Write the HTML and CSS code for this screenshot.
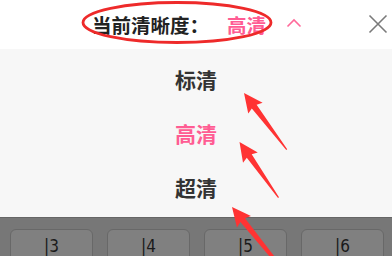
FILE: index.html
```html
<!doctype html>
<html lang="zh-CN">
  <head>
    <meta charset="UTF-8" />
    <meta name="viewport" content="width=device-width, initial-scale=1.0" />
    <title>清晰度</title>
    <link rel="stylesheet" href="styles.css">
  </head>
  <body>
    <div class="screen">
      <div class="header">
        <div class="current">
          <span class="label">当前清晰度：</span>
          <span class="value">高清</span>
        </div>
        <svg class="chevron" width="16" height="10" viewBox="0 0 16 10">
          <path d="M1.5 8.5 L8 2 L14.5 8.5" fill="none" stroke="#ff6a9a" stroke-width="1.6" />
        </svg>
        <svg class="close" width="20" height="20" viewBox="0 0 20 20">
          <path d="M1.5 1.5 L18.5 18.5 M18.5 1.5 L1.5 18.5" stroke="#7a7a7a" stroke-width="1.6" />
        </svg>
      </div>

      <div class="menu">
        <div class="item">标清</div>
        <div class="item active">高清</div>
        <div class="item">超清</div>
      </div>

      <div class="episodes">
        <div class="ep">|3</div>
        <div class="ep">|4</div>
        <div class="ep">|5</div>
        <div class="ep">|6</div>
      </div>

      <!-- annotation marks over the screenshot -->
      <svg class="marks" width="392" height="256" viewBox="0 0 392 256">
        <ellipse cx="177" cy="22.5" rx="94" ry="20" fill="none" stroke="#ee2a2a" stroke-width="2.8" />
        <g fill="#ff3333">
          <path transform="translate(244 93) rotate(-37)" d="M0 0 L9 19 L3 17 L0.6 71 L-0.6 71 L-3 17 L-9 19 Z" />
          <path transform="translate(239.5 142) rotate(-35)" d="M0 0 L9 19 L3 17 L0.6 68 L-0.6 68 L-3 17 L-9 19 Z" />
          <path transform="translate(232 207) rotate(-39)" d="M0 0 L9 19 L3 17 L1.5 80 L-1.5 80 L-3 17 L-9 19 Z" />
        </g>
      </svg>
    </div>
  </body>
</html>
```

FILE: styles.css
```css
body {
  margin: 0;
  font-family: "Noto Sans CJK SC", "Noto Sans", sans-serif;
  background: #ffffff;
}

.screen {
  position: relative;
  width: 392px;
  height: 256px;
  overflow: hidden;
  display: flex;
  flex-direction: column;
}

.header {
  height: 49px;
  background: #ffffff;
  display: flex;
  align-items: center;
  flex-shrink: 0;
}

.current {
  margin-left: 92px;
  display: flex;
  align-items: center;
  font-size: 19.5px;
  font-weight: 700;
  line-height: 24px;
}

.label {
  color: #222222;
}

.value {
  margin-left: 18px;
  color: #ff5c93;
}

.chevron {
  margin-left: 20px;
  margin-top: -4px;
}

.close {
  margin-left: 66px;
  margin-top: -2px;
}

.menu {
  height: 168px;
  background: #f7f7f7;
  padding-top: 3px;
  box-sizing: border-box;
  display: flex;
  flex-direction: column;
  flex-shrink: 0;
}

.item {
  height: 54px;
  display: flex;
  align-items: center;
  justify-content: center;
  font-size: 21px;
  font-weight: 700;
  color: #333333;
}

.item.active {
  color: #ff5c93;
}

.episodes {
  flex: 1;
  background: #777777;
  border-top: 1px solid #666666;
  padding: 11px 8px 0 10px;
  display: grid;
  grid-template-columns: repeat(4, 83px);
  column-gap: 14px;
}

.ep {
  height: 40px;
  box-sizing: border-box;
  background: #808080;
  border: 1px solid #686868;
  border-radius: 6px;
  display: flex;
  justify-content: center;
  padding-top: 6px;
  font-family: "DejaVu Sans Condensed", "Liberation Sans Narrow", sans-serif;
  font-size: 17px;
  line-height: 20px;
  color: #1a1a1a;
}

.marks {
  position: absolute;
  left: 0;
  top: 0;
  pointer-events: none;
}
```
